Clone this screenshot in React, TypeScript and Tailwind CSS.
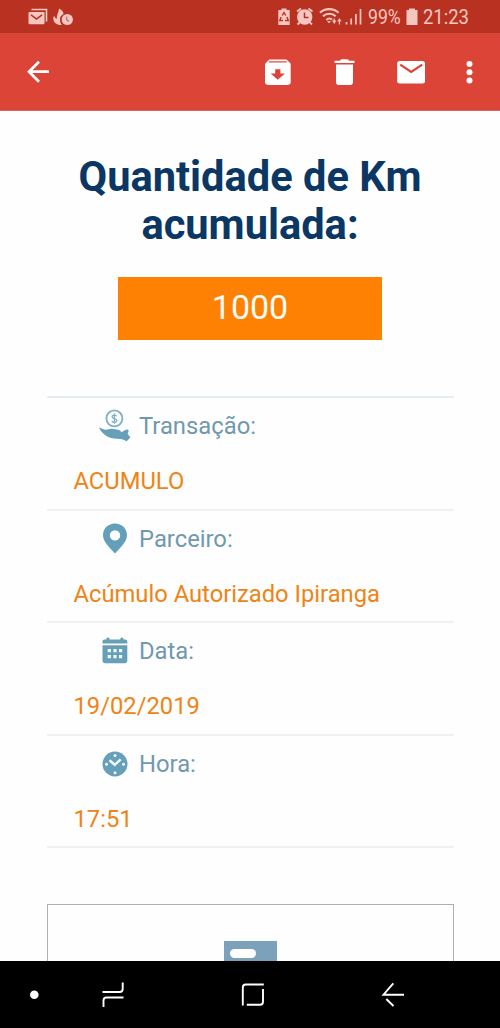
import type { ReactNode } from "react";

const HandCoinIcon = () => (
  <svg width="32" height="34" viewBox="0 0 32 34" fill="none">
    <circle cx="15.4" cy="9.4" r="8" stroke="#7fb0c6" strokeWidth="1.8" />
    <path
      d="M17.700 7.300c-.5-.9-1.300-1.200-2.300-1.200-1.400 0-2.300.7-2.300 1.700 0 2.500 4.700 1.200 4.700 3.800 0 1.100-1 1.800-2.400 1.800-1.200 0-2.100-.5-2.500-1.500M15.400 4.400v10.300"
      stroke="#7fb0c6"
      strokeWidth="1.3"
    />
    <path
      d="M0 18.600c2 .5 4 2 6.500 2.100 2.500.1 4.500-1.300 7-.9l6.500 1.100c1.700.4 2.200 1.300 1.700 2.400 2.300-.4 4.200-2.300 6.500-2.700 1.400-.1 1.700 1 1.300 1.900l-.9 2.200 2.800 3.700-3.800 3.800c-2-.8-4-2-6.500-2.200-4-.2-8.200-.3-11.700-1.900C5.500 26.300 1.500 22.300 0 18.600z"
      fill="#659fb9"
    />
  </svg>
);

const PinIcon = () => (
  <svg width="32" height="34" viewBox="0 0 32 34">
    <path
      fillRule="evenodd"
      d="M16 1.500C9.200 1.500 4 6.500 4 13.100c0 6.900 6.500 12.600 12 18.400 5.500-5.800 12-11.500 12-18.400C28 6.500 22.800 1.500 16 1.500zm0 6.700a5.200 5.200 0 1 1 0 10.400 5.200 5.200 0 0 1 0-10.400z"
      fill="#639fb8"
    />
  </svg>
);

const CalendarIcon = () => (
  <svg width="32" height="34" viewBox="0 0 32 34">
    <path
      d="M3.500 9.500V7.600c0-1.100.8-2 2-2h1.800V5c0-2.100 3.200-2.100 3.200 0v.6h10.800V5c0-2.100 3.200-2.100 3.200 0v.6h1.800c1.200 0 2 .9 2 2v1.900z"
      fill="#679fb9"
    />
    <path d="M3.500 11.200h24.800v15.500c0 1.500-1 2.500-2.500 2.500H6c-1.500 0-2.500-1-2.500-2.500z" fill="#679fb9" />
    <path
      d="M8.700 15h3.200v3.200H8.700zM14.400 15h3.200v3.200h-3.200zM20 15h3.200v3.200H20zM8.700 21h3.200v3.200H8.700zM14.400 21h3.200v3.200h-3.200zM20 21h3.200v3.200H20z"
      fill="#f1faff"
    />
  </svg>
);

const ClockIcon = () => (
  <svg width="32" height="34" viewBox="0 0 32 34">
    <circle cx="16" cy="17" r="12.5" fill="#669fb9" />
    <path d="M10.500 13.200l5.200 4.600 6-5.500" stroke="#f1faff" strokeWidth="2.5" fill="none" />
    <g fill="#f1faff">
      <circle cx="16" cy="8.500" r="1.5" />
      <circle cx="16" cy="25.700" r="1.5" />
      <circle cx="7.500" cy="17.200" r="1.5" />
      <circle cx="24.500" cy="17.200" r="1.5" />
    </g>
  </svg>
);

const rows: { label: string; value: string; icon: ReactNode }[] = [
  { label: "Transação:", value: "ACUMULO", icon: <HandCoinIcon /> },
  { label: "Parceiro:", value: "Acúmulo Autorizado Ipiranga", icon: <PinIcon /> },
  { label: "Data:", value: "19/02/2019", icon: <CalendarIcon /> },
  { label: "Hora:", value: "17:51", icon: <ClockIcon /> },
];

const StatusBar = () => (
  <div className="flex h-[33px] items-center bg-[#b93221] text-[20.5px] leading-[33px] text-[#f6c7c0]">
    <svg className="ml-7" width="46" height="33" viewBox="28 0 46 33" fill="none">
      <path d="M31.500 9.500h15v12" stroke="#f6c7c0" strokeWidth="1.600" />
      <rect x="28.500" y="12" width="16" height="12.300" rx="1" fill="#f6c7c0" />
      <path d="M31 14.800l5.500 4.200 5.500-4.200" stroke="#b93221" strokeWidth="1.500" />
      <path
        d="M59 8.500c3 1.500 4.500 3.400 4.500 5.500-2.700 1.300-3.800 3.500-3.500 6 .1 2.100.7 3.700 1.800 5-5 .2-8.300-2-8.500-6.500 0-1.300.3-2.200.8-2.800.7 2 1.700 2.900 3.100 3-1.200-3.200 1.600-5.900 1.800-10.200z"
        fill="#f6c7c0"
      />
      <circle cx="67.300" cy="19.500" r="5.600" fill="#f6c7c0" />
      <path d="M66.700 16.500v3.300l2.300 1.700" stroke="#b67a75" strokeWidth="1.300" />
    </svg>
    <svg className="ml-[204px]" width="86" height="33" viewBox="278 0 86 33" fill="none">
      <path d="M281.500 8.500h5V10h3.200v15h-11.400V10h3.200z" fill="#f6c7c0" />
      <path d="M282.200 15.500l1.800-3 1.800 3M287 17l1.300 3.500h-3.200M283 20.500h-3.200l1.400-3.500" stroke="#b93221" strokeWidth="1.400" />
      <circle cx="304.700" cy="17" r="7.700" fill="#f6c7c0" />
      <path d="M297 11.500l4-3M312.500 11.500l-4-3M299.500 22.500l-2 2M310 22.500l2 2" stroke="#f6c7c0" strokeWidth="1.800" />
      <path d="M304.500 12.500v5h4" stroke="#b93221" strokeWidth="1.500" />
      <path d="M320 12.700c5-4.800 13.500-4.800 18.500 0M323 16.300c3.500-3.400 9.200-3.400 12.700 0M326.300 19.900c1.600-1.600 4-1.600 5.700-.4" stroke="#f6c7c0" strokeWidth="2.100" />
      <path d="M327 21h4l-2 2.300z" fill="#f6c7c0" />
      <path d="M332 20.500h4.400l-2.200 3.500zM337.200 21.500h4.400l-2.200-3.500z" fill="#f6c7c0" />
      <path d="M339.400 21v3.500M334.200 18.500v3" stroke="#f6c7c0" strokeWidth="1.200" />
      <path d="M346.500 22v2.500M351.200 18.500v6M355.900 14v10.500M360.500 9v15.500" stroke="#f6c7c0" strokeWidth="1.700" />
    </svg>
    <span className="ml-1 w-[33px] origin-left translate-y-px scale-x-[0.86]">99%</span>
    <svg className="ml-[5px]" width="12" height="33" viewBox="0 0 12 33" fill="#f6c7c0">
      <path d="M3 8.500h6V10h2.500v15H.5V10H3z" />
    </svg>
    <span className="ml-[5px] origin-left translate-y-px scale-x-90">21:23</span>
  </div>
);

const AppBar = () => (
  <div className="flex h-[78px] items-center border-b border-[#c9695f] bg-[#dc4437] text-white">
    <svg className="ml-[27px]" width="23" height="78" viewBox="27 0 23 78" fill="none" stroke="currentColor" strokeWidth="2.700">
      <path d="M49 38.700H28.500M39 28.700l-10 10 10 10" />
    </svg>
    <svg className="ml-[214px]" width="28" height="78" viewBox="264 0 28 78">
      <path
        d="M269.300 26.500h17.200l3.600 3.600c.5.600.6 1 .6 1.800v17.200c0 1.800-1 2.800-2.800 2.800h-20.100c-1.800 0-2.800-1-2.800-2.800V31.900c0-.8.200-1.200.6-1.700z"
        fill="currentColor"
      />
      <path d="M268.800 28.900h18" stroke="#dc4437" strokeWidth="1.200" />
      <path d="M275.200 36.300h5.200v4.300h4.500l-7.100 6.200-7.100-6.200h4.500z" fill="#dc4437" />
    </svg>
    <svg className="ml-[42px]" width="22" height="78" viewBox="334 0 22 78" fill="currentColor">
      <path d="M334.500 27.700h5.300l1.500-1.400h6.400l1.500 1.400h5.300V30h-20zM336 31.500h17v17.800c0 1.600-1 2.600-2.600 2.600h-11.800c-1.600 0-2.600-1-2.600-2.600z" />
    </svg>
    <svg className="ml-[41px]" width="28" height="78" viewBox="397 0 28 78">
      <rect x="397.200" y="28" width="27.800" height="22.500" rx="2.500" fill="currentColor" />
      <path d="M400.200 31.700l11 7.300 11-7.300" fill="none" stroke="#dc4437" strokeWidth="2.200" />
    </svg>
    <svg className="ml-[41px]" width="7" height="78" viewBox="466 0 7 78" fill="currentColor">
      <circle cx="469.500" cy="31" r="3" />
      <circle cx="469.500" cy="39.200" r="3" />
      <circle cx="469.500" cy="47.500" r="3" />
    </svg>
  </div>
);

const NavBar = () => (
  <div className="h-[67px] shrink-0 bg-black">
    <svg width="500" height="67" viewBox="0 961 500 67" fill="none" stroke="#fff" strokeWidth="1.900">
      <circle cx="34.300" cy="994.700" r="4.300" fill="#fff" stroke="none" />
      <path d="M102.500 992h17.200c2 0 3-1 3-3v-6.500M123.500 997.500h-17c-2 0-3 1-3 3v6.500" />
      <path d="M263.800 984.500h-18c-2 0-3 1-3 3v18M246.800 1004.700h13.200c2 0 3-1 3-3V989" />
      <path d="M404 994.700h-20.500l9.800-11.300M386.300 999l7.200 7" />
    </svg>
  </div>
);

const App = () => {
  return (
    <div className="flex h-[1028px] w-[500px] flex-col overflow-hidden bg-[#fefefe] font-['Roboto',sans-serif]">
      <StatusBar />
      <AppBar />

      <main className="h-[850px] overflow-hidden pl-[47px] pr-[46px] pt-[42px]">
        <h1 className="-ml-px text-center text-[41.6px] font-bold leading-[48px] text-[#0a3764]">
          Quantidade de Km
          <br />
          acumulada:
        </h1>
        <div className="ml-[71px] mt-7 h-[63px] w-[264px] bg-[#ff8104] text-center text-[34px] leading-[60px] text-[#fffdf5]">
          1000
        </div>

        <div className="mt-14 border-t-2 border-[#e3eef6]">
          {rows.map((row) => (
            <div key={row.label} className="h-[112.5px] border-b-2 border-[#eff2f4] pt-[11px]">
              <div className="flex h-[34px] items-center gap-2 pl-[52px] text-[23.8px] leading-[34px] text-[#7199ae]">
                {row.icon}
                <span>{row.label}</span>
              </div>
              <p className="mt-[21px] pl-[26.5px] text-[23.75px] leading-[34px] text-[#ee8415]">{row.value}</p>
            </div>
          ))}
        </div>

        <div className="mt-[56px] flex h-[120px] justify-center border border-[#afafaf] pt-9">
          <div className="h-20 w-[53px] bg-[#7ba2ba] pl-[6px] pt-2">
            <div className="h-[9px] w-[26px] rounded-full bg-white" />
          </div>
        </div>
      </main>

      <NavBar />
    </div>
  );
};

export default App;
